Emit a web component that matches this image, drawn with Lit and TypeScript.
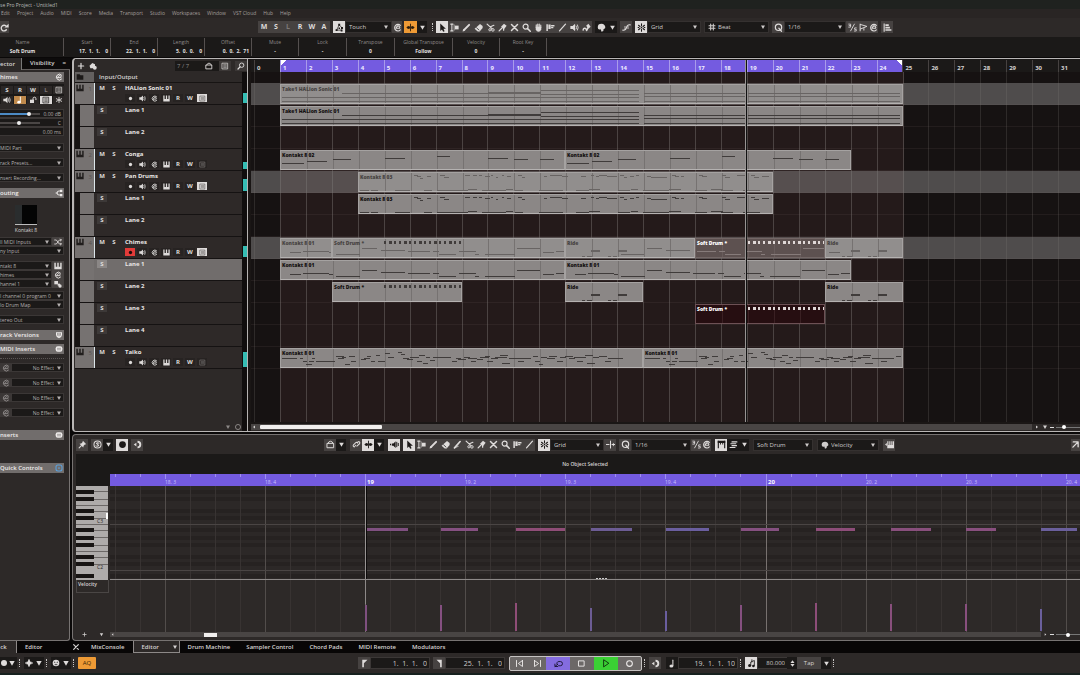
import { LitElement, html, svg, css, nothing } from "lit";
import { customElement, state } from "lit/decorators.js";
import { classMap } from "lit/directives/class-map.js";

const BAR = 25.94;
const ORIGIN = 3;
const barX = (n: number) => Math.round(ORIGIN + n * BAR);

const st = (d: string, w = 1.3) =>
  svg`<path d=${d} fill="none" stroke="currentColor" stroke-width=${w} stroke-linecap="round" stroke-linejoin="round"/>`;
const fl = (d: string) => svg`<path d=${d} fill="currentColor"/>`;

const ICONS: Record<string, unknown> = {
  down: fl("M2 3h8L6 10z"),
  left: fl("M8 3v6L4 6z"),
  right: fl("M4 3v6l4-3z"),
  updown: svg`${fl("M2.500 5h7L6 .500z")}${fl("M2.500 7h7L6 11.500z")}`,
  redo: svg`${st("M8.500 4.500A3.800 3.800 0 1 0 8.500 9", 1.8)}${fl("M6 6h5.500v-5z")}`,
  autom: svg`${st("M2.200 9.500L5.500 2.500L9.500 6.500M2.500 9.500H9", .9)}${fl("M4.300 1h2.600v2.600H4.300zM.800 8.200h2.600v2.600H.800zM8 5.300h2.600v2.600H8zM7.600 8.800h2.400v2.400H7.600zM4.700 6h2v2h-2z")}`,
  edit: st("M9.800 3.200A4.400 4.400 0 1 0 9.800 9.200M4.200 7h4.600A1.800 1.800 0 0 0 5.200 5Q4.200 5.600 4.200 7", 1.5),
  link: svg`${st("M6 1.500v9", 1.2)}${fl("M.500 6l2-2v1.200h2.800V3.500l.200 5H5.300V6.800H2.500V8zM11.500 6l-2-2v1.200H6.800v1.600h2.700V8z")}${fl("M2.800 4h2v4h-2zM7.200 4h2v4h-2z")}`,
  arrow: fl("M3 .500V10.500l2.300-2 1.600 3.300 1.900-.900-1.500-3.200h3.200z"),
  range: svg`${st("M1 1.500h3M1 10.500h3M2.500 1.500v9", 1.4)}${fl("M6.500 3.500h5v5h-5z")}${st("M5.500 2.500v7", .9)}`,
  pencil: svg`${st("M3.500 8.500L9.500 2.500", 2.6)}${fl("M.800 11.200l.900-3.700 2.800 2.800z")}`,
  eraser: svg`${fl("M.800 7.500L5 11.200h2.500L11.500 6.500V4L8 1.200z")}<path d="M3 6l4 3.700" stroke="#333" stroke-width="1.100"/>`,
  knife: svg`${st("M2 10.500L9.500 2", 2.2)}${st("M2 10.500l5-2", 1)}`,
  scissors: svg`${st("M1.500 1.500L8 7.500M6 5L10.500 3", 1.600)}<circle cx="9.200" cy="9.200" r="1.700" fill="none" stroke="currentColor" stroke-width="1.300"/><circle cx="5.200" cy="9" r="1.500" fill="none" stroke="currentColor" stroke-width="1.300"/>`,
  glue: svg`${fl("M4 5L8 1l3.500 2.800-3 4z")}${st("M1.500 10.500L6 6M7.500 6.500v3", 1.700)}`,
  mute: st("M2 2l8 8M10 2l-8 8", 2),
  zoom: svg`<circle cx="4.800" cy="4.800" r="3.300" fill="none" stroke="currentColor" stroke-width="1.600"/>${st("M7.500 7.500L11 11", 2)}`,
  search: svg`<circle cx="7" cy="4.800" r="3.300" fill="none" stroke="currentColor" stroke-width="1.400"/>${st("M4.500 7.300L1.500 10.500", 1.900)}`,
  hand: svg`${st("M3 6v-3.500M5 5V1.500M7 5V1.500M9 6V2.800", 1.500)}${fl("M2.300 5h7.400v3.500Q8.500 11.500 6 11.500 3.500 11.500 2.300 8.500z")}`,
  comp: fl("M.500 1.500h2v9h-2zM3.200 2h3v6h-3zM6.800 2.500h4.500v2.300H6.800zM6.800 5.300h3v1.700h-3z"),
  line: st("M2 10.500L10 1.500", 1.700),
  speaker: svg`${fl("M.500 4h3L6.800 1v10L3.500 8h-3z")}${st("M8.300 4Q9.600 6 8.300 8M10 2.500Q12 6 10 9.500", 1.200)}`,
  color: svg`${fl("M5.500 3.500L8.500 1l3 4-3 2.500z")}${st("M1.500 9.500Q2 6.500 4 7T6 9.500 8 6", 1.900)}`,
  palette: svg`<path d="M6 1a5 4.600 0 0 0-5 4.600Q1 9 4 8.500L5 8.300 6 11.500 8.500 10.500V8.500L11 6.500A5 4.800 0 0 0 6 1z" fill="currentColor"/>`,
  cross: svg`${st("M1 9.500Q5 10 6 6T11 2.500", 1.400)}${st("M4 4.500v3M8 4.500v3", 1.100)}`,
  snap: svg`${st("M6 1v2.500M6 8.500v2.500M2 3l2 1.700M10 3L8 4.700M2 9l2-1.700M10 9L8 7.300M1.500 6h1M9.500 6h1", 1.400)}${fl("M5 5h2v2H5z")}`,
  hash: st("M4 1.500v9M8 1.500v9M1.500 4h9M1.500 8h9", 1.600),
  q: svg`<circle cx="6" cy="5.800" r="4.200" fill="none" stroke="currentColor" stroke-width="1.600"/>${st("M6.500 7l3.500 4", 1.600)}`,
  frac: svg`${st("M3.500 10.500L8.500 1.500", 1.200)}${st("M1 1.500h2.500v4H1M1.500 3.500h2M11 6.500H8.800v2H11v2.200H8.500", 1.100)}`,
  quant: svg`${st("M1.500 1.500v9M2 2l8.500 2.500L2 8M6.500 7.500v2", 1.300)}`,
  align: fl("M.800 .500h1.500v11H.800zM3.200 1.800h4.500v2.200h-4.500zM3.200 5h6v2.200h-6zM3.200 8.200h8v2.200h-8z"),
  plus: st("M6 2v8M2 6h8", 1.800),
  addtrk: svg`${fl("M.800 5.500L5 1.500 9 3.500v3l-3 3H2z")}<circle cx="8.700" cy="8.700" r="2.900" fill="currentColor"/>`,
  home: svg`${st("M1.800 4.500H10.200V10.300H1.800z", 1.300)}${st("M2.500 4.500Q3.500 1.700 6 1.700T9.500 4.500", 1.300)}`,
  list: svg`${st("M2 1.800h8v8.600H2z", 1.100)}${st("M4 4.200h4M4 6.100h4M4 8h4", .9)}`,
  folder: fl("M1 2h4.500l1 1.500h4.500v6.500H1z"),
  piano: fl("M.500 1h2.200v6h2.200V1h2.200v6h2.200V1h2.200v10H.500z"),
  rec: svg`<circle cx="6" cy="6" r="2.800" fill="currentColor"/>`,
  big: svg`<circle cx="6" cy="6" r="4.500" fill="currentColor"/>`,
  note: svg`<ellipse cx="4.500" cy="9.200" rx="2.600" ry="2" fill="currentColor"/>${st("M6.500 9V1.500", 1.400)}`,
  lock: svg`${fl("M1.500 5.500H7.500v5h-6z")}${st("M6 5.500V4a2.200 2.200 0 0 1 4.400 0v1.500", 1.500)}`,
  star: st("M6 2v8M2 4l8 4M10 4L2 8", 1.300),
  route: svg`${st("M8 3H6A3 3 0 0 0 6 9h2M1.500 6h2", 1.400)}${fl("M7.500 1.300h3.500v3.200H7.500zM7.500 7.500h3.500v3.200H7.500z")}`,
  shuffle: st("M1 3h2.500L8 9h3M1 9h2.500L8 3h3M9.500 1.500L11 3 9.500 4.500M9.500 7.500L11 9 9.500 10.500", 1.300),
  plug: svg`${fl("M.500 1.500h5.500v5h-5.500z")}${fl("M5.500 5.500H9v3H5.500z")}<circle cx="9" cy="9" r="2.500" fill="currentColor"/>`,
  shield: svg`${fl("M1.500 2h9v4Q10 10 6 11 2 10 1.500 6z")}<path d="M4 3v4M8 3v4M6 3v5" stroke="#6c6867" stroke-width="1"/>`,
  ins: svg`<rect x="1" y="2" width="10" height="8" rx="3" fill="currentColor"/><path d="M3 5h6M3 7.200h6" stroke="#6c6867" stroke-width=".8"/>`,
  qc: svg`<rect x="1.500" y="1.500" width="9" height="9" rx="3" fill="none" stroke="#5aa0dc" stroke-width="1.600"/><circle cx="6" cy="6" r="1.300" fill="#5aa0dc"/>`,
  ring: svg`<circle cx="6" cy="6" r="3.800" fill="none" stroke="currentColor" stroke-width="1.400"/>`,
  pin: svg`${fl("M6.500 1l4.500 4.500-1.800.500-1.700 1.700-.500 2.300L2 5l2.300-.500L6 3z")}${st("M4.500 7.500L1.500 10.500", 1.400)}`,
  solo: svg`<circle cx="6" cy="6" r="4.700" fill="none" stroke="currentColor" stroke-width="1.400"/>${st("M8 4.300Q6 3 4.700 4.500L7.500 7.200Q6 9 4 7.800", 1.400)}`,
  half: svg`${fl("M6 1a5 5 0 0 1 0 10V8.500a2.500 2.500 0 0 0 0-5z")}${fl("M1 6l3.500-2.500v5z")}`,
  chain: svg`${st("M5 7L3 9.300a1.700 1.700 0 0 1-1-2.800l3-3a1.700 1.700 0 0 1 2.500.500", 1.400)}${st("M6.500 8.200L10 5a1.700 1.700 0 0 0-1.500-2.800L7 3.500", 1.400)}`,
  spkr2: svg`${fl("M0 5h1.500v2H0zM2.500 4.500h2l3-3v9L4.500 7.500h-2z")}${st("M9 3v6M11 4.500v3", 1.300)}`,
  nudge: svg`${st("M6 1.500v9M.500 6h3.500M8 6h3.500", 1.400)}${fl("M8 6l2.500-2.500v5z")}`,
  gate: svg`${fl("M1 1h10v3H1z")}${fl("M1 1h1.500v10H1zM9.500 1H11v10H9.500zM4 4h1.200v2H4zM7 4h1.200v2H7z")}`,
  layers: st("M4 2.500h6.500M2.500 5h6.500M4 7.500h6M1.500 10h6.500", 1.600),
  keys: svg`${fl("M3 1.500h1.600v5h1.100v-5h1.600v5h1.100v-5H10v5h.700v-5H12V11H3z")}${fl("M0 6l2.500-2v4z")}`,
  ext: st("M3 2.500h6.500V9M9.500 2.500L2.500 9.500", 1.800),
  cornerL: fl("M3 1h7L5.200 5.500V11H3z"),
  cornerR: fl("M9 1H2l4.800 4.500V11H9z"),
  prev: st("M2 2v8M10 2v8L4.500 6L10 2", 1.200),
  next: st("M10 2v8M2 2v8L7.500 6L2 2", 1.200),
  cycle: svg`${st("M6 9h2.500a2.800 2.800 0 0 0 0-5.600H6.500a2.500 2.500 0 0 0-2 4.200", 1.200)}${st("M5 7L1.500 9.800M1.200 6.800v3.200h3.600", 1.200)}`,
  stop: st("M2.500 2.500h7v7h-7z", 1.200),
  play: st("M3.500 1.500v9L10 6z", 1.200),
  metro: svg`<circle cx="3.500" cy="8.700" r="2" fill="currentColor"/><circle cx="8.500" cy="9.300" r="1.700" fill="currentColor"/>${st("M5 8.500V4l4.800-2v7M6.500 1v3", 1.100)}`,
  wave: fl("M0 5.300h2l1-1.800 1 1L5.300 .500h1.400L8 4.500l1-1 1 1.800h2v1.400h-2L9 8.500 8 7.500 6.700 11.500H5.300L4 7.500l-1 1-1-1.800H0z"),
  reel: svg`<circle cx="6" cy="6" r="5" fill="currentColor"/><path d="M3 4.500l2 1M9 4.500l-2 1M4 8.500h4" stroke="#222" stroke-width="1.200"/>`,
  x: st("M2.500 2.500l7 7M9.500 2.500l-7 7", 1.800),
};

const icon = (n: string, s = "") =>
  html`<svg class="ic ${s}" viewBox="0 0 12 12" aria-hidden="true">${ICONS[n]}</svg>`;

const btn = (n: string, label: string, cls = "") =>
  html`<button class="b ${cls}" aria-label=${label}>${icon(n)}</button>`;

const sel = (label: string, value: string, cls = "", lead: unknown = nothing) =>
  html`<label class="sel ${cls}">${lead}<select aria-label=${label}><option>${value}</option></select>${icon("down", "car")}</label>`;

const grip = () => html`<span class="grip"></span>`;

type Note = number[];
interface Clip { at: number; to: number; name: string; kind?: string; notes: Note[]; ticks?: boolean; }
interface Row { name: string; num?: number; clips: Clip[]; part?: boolean; armed?: boolean; meter?: number; picked?: boolean; }

const CONGA: Note[] = [[1,22,12],[26,20,10],[52,18,8],[104,20,7],[156,13,5],[207,20,7],[233,14,8],[259,14,8]];
const PAN: Note[] = [[55,4,2],[58,4,3],[61,3,5],[68,4,3],[81,5,2],[85,5,4],[106,5,2],[114,4,2],[120,3,2],[126,5,3],[132,2,2],[137,2,4],[143,2,2],[148,4,3],[159,4,2],[163,3,4],[185,3,3],[191,12,2],[203,6,3],
  [1,9,17],[12,7,17],[36,15,17],[65,8,17],[78,31,17],[109,9,16],[123,24,17],[147,7,16],[156,8,17],[180,24,17],[217,13,17],[230,11,16],[259,12,17],[272,7,16],[284,26,17],[310,12,16],[336,12,17],[352,12,16],[362,12,17],[384,17,17],
  [222,5,3],[232,3,2],[237,3,3],[240,8,2],[248,10,3],[261,4,2],[265,3,4],[271,4,3],[277,3,2],[288,4,3],[292,16,4],[313,4,2],[316,4,3],[322,3,3],[340,4,2],[343,5,3],[363,4,2],[366,5,4],[378,4,2],[381,6,2],[392,4,2],[395,5,4],[403,7,3]];
const CHIMES: Note[] = [[9,11,13],[22,26,12],[48,4,13],[55,24,15],[81,15,9],[100,24,11],[127,22,12],[152,6,12],[158,17,15],[178,17,12],[194,4,15],[204,30,15],[236,23,9],[262,11,13],[275,9,12]];
const RIDE: Note[] = [[16,3,17],[21,5,17],[25,9,11],[25,9,12],[42,3,17],[47,4,17],[52,9,11],[52,9,12]];
const TAIKO: Note[] = [[1,15,9],[19,3,9],[22,4,12],[25,6,15],[28,5,12],[31,3,9],[35,19,12],[55,8,7],[57,6,9],[61,4,8],[64,5,15],[68,6,7],[70,5,12],[80,5,10],[83,6,9],[86,4,7],[90,4,12],[95,4,6],[97,7,12],[104,5,4],[107,6,8],[117,4,3],[120,4,5],[122,6,9],[126,6,10],[129,9,8],[136,5,12],[138,6,6],[142,5,14],[145,4,8],[149,5,11],[152,18,8],[171,5,12],[175,5,9],[177,8,10],[183,6,8],[187,9,9],[190,5,12],[196,6,10],[199,9,8],[204,5,7],[206,6,12],[210,7,9],[214,12,8],[219,8,6],[221,8,14],[228,22,9],[237,6,12],[252,5,7],[254,5,12],[258,4,15],[260,6,8],[266,8,9],[268,8,7],[276,6,12],[279,6,8]];
const TAIKO_A: Note[] = [...TAIKO, [284,8,7],[288,6,9],[293,12,8],[296,6,12],[304,8,6],[306,8,14],[312,6,8],[318,8,7],[324,6,12],[327,8,9],[335,7,9]];
const TAIKO_B: Note[] = TAIKO.filter((n) => n[0] < 254);
const TAKE: Note[] = [[61,146,8],[104,27,8],[207,53,8],[207,53,7],[260,98,5],[260,98,9],[363,102,8],[363,102,11],[467,152,8],[467,152,11],[1,357,12],[1,357,16],[363,102,16],[467,152,16],[1,617,18]];

const ROWS: Row[] = [
  { name: "HALion Sonic 01", num: 1, part: true, meter: 10, clips: [{ at: 1, to: 25, name: "Take1 HALion Sonic 01", kind: "dim", notes: TAKE }] },
  { name: "Lane 1", clips: [{ at: 1, to: 25, name: "Take1 HALion Sonic 01", notes: TAKE }] },
  { name: "Lane 2", clips: [] },
  { name: "Conga", num: 2, meter: 7, clips: [{ at: 1, to: 12, name: "Kontakt 8 02", notes: CONGA }, { at: 12, to: 23, name: "Kontakt 8 02", notes: CONGA }] },
  { name: "Pan Drums", num: 3, part: true, meter: 12, clips: [{ at: 4, to: 20, name: "Kontakt 8 03", kind: "dim", notes: PAN }] },
  { name: "Lane 1", clips: [{ at: 4, to: 20, name: "Kontakt 8 03", notes: PAN }] },
  { name: "Lane 2", clips: [] },
  { name: "Chimes", num: 4, part: true, armed: true, meter: 11, clips: [
    { at: 1, to: 3, name: "Kontakt 8 01", kind: "dim", notes: CHIMES },
    { at: 3, to: 12, name: "Soft Drum *", kind: "dim", ticks: true, notes: CHIMES.map(([x, w, y]) => [x - 52, w, y]).filter((n) => n[0] > 0) },
    { at: 12, to: 17, name: "Ride", kind: "dim", notes: [...RIDE, [55, 23, 15], [81, 15, 9], [100, 24, 11]] },
    { at: 17, to: 22, name: "Soft Drum *", kind: "mix", ticks: true, notes: [[1,19,12],[23,6,12],[29,16,15],[49,17,12],[65,4,15],[75,30,15],[107,22,9]] },
    { at: 22, to: 25, name: "Ride", kind: "dim", notes: [...RIDE, [3, 11, 13]] }] },
  { name: "Lane 1", picked: true, clips: [{ at: 1, to: 12, name: "Kontakt 8 01", notes: CHIMES }, { at: 12, to: 23, name: "Kontakt 8 01", notes: CHIMES }] },
  { name: "Lane 2", clips: [{ at: 3, to: 8, name: "Soft Drum *", ticks: true, notes: [] }, { at: 12, to: 15, name: "Ride", notes: RIDE }, { at: 22, to: 25, name: "Ride", notes: RIDE }] },
  { name: "Lane 3", clips: [{ at: 17, to: 22, name: "Soft Drum *", kind: "hot", ticks: true, notes: [] }] },
  { name: "Lane 4", clips: [] },
  { name: "Taiko", num: 5, meter: 15, clips: [{ at: 1, to: 15, name: "Kontakt 8 01", notes: TAIKO_A }, { at: 15, to: 25, name: "Kontakt 8 01", notes: TAIKO_B }] },
];

const MENU = ["Edit", "Project", "Audio", "MIDI", "Score", "Media", "Transport", "Studio", "Workspaces", "Window", "VST Cloud", "Hub", "Help"];
const INFO = [["Name", "Soft Drum"], ["Start", "17.  1.  1.    0"], ["End", "22.  1.  1.    0"], ["Length", "5.  0.  0.    0"], ["Offset", "0.  0.  2.  71"],
  ["Mute", "-"], ["Lock", "-"], ["Transpose", "0"], ["Global Transpose", "Follow"], ["Velocity", "0"], ["Root Key", "-"]];
const TOOLS = ["range", "pencil", "eraser", "scissors", "glue", "mute", "zoom", "hand", "comp", "line", "speaker", "color"];
const KEY_TOOLS = ["range", "pencil", "eraser", "knife", "scissors", "glue", "mute", "zoom", "comp", "line"];

const BEAT = 100.13;
const HITS = [
  [256, 42, 26, "#7f5080"], [331, 37, 26, "#855081"], [406, 49, 28, "#8f4d77"], [481, 41, 23, "#6c5c94"], [556, 43, 20, "#6a5e9f"],
  [631, 38, 26, "#855080"], [706, 39, 28, "#8d4d79"], [781, 40, 27, "#884f7c"], [856, 30, 27, "#884f7e"], [931, 36, 22, "#6a5f9c"],
] as [number, number, number, string][];

@customElement("app-root")
export class AppRoot extends LitElement {
  @state() private lowerTab = "Editor";
  @state() private barCount = 32;

  private onResize = () => {
    this.barCount = Math.floor((window.innerWidth - 262) / BAR) + 1;
  };

  connectedCallback() {
    super.connectedCallback();
    this.onResize();
    window.addEventListener("resize", this.onResize);
  }

  disconnectedCallback() {
    window.removeEventListener("resize", this.onResize);
    super.disconnectedCallback();
  }

  static styles = css`
    :host { display: block; height: 100vh; min-height: 480px; overflow: hidden; background: #0a0808; color: #d6d3d2;
      font: 6px/8px "Open Sans", "Noto Sans", sans-serif; }
    * { box-sizing: border-box; }
    button, select, input { font: inherit; color: inherit; border: 0; padding: 0; margin: 0; background: none; border-radius: 0; min-width: 0; }
    select { appearance: none; flex: 1; outline: 0; }
    .ic { width: 8px; height: 8px; flex: none; display: block; }
    .b .ic { width: 9px; height: 9px; }
    .b.dk.n .ic { width: 7px; height: 7px; }
    .ic.car { width: 6px; height: 6px; pointer-events: none; }
    .app { display: grid; grid-template-rows: 9px 9px 19px 20px minmax(0, 1fr) 12px 20px 2px; height: 100%; }
    .title { background: #1f221f; font-size: 5px; line-height: 10px; color: #bbb; }
    .menu { background: #292524; display: flex; gap: 7px; font-size: 5px; color: #a39f9d; padding-left: 1px; }
    .menu a { color: inherit; text-decoration: none; line-height: 9px; }
    .row { display: flex; align-items: center; }
    .bar { background: #2d2928; height: 100%; padding-bottom: 1px; }
    .lead { width: 258px; flex: none; }
    .lead .b { width: 9px; }
    .b { width: 12px; height: 12px; flex: none; display: flex; align-items: center; justify-content: center; background: #464241; color: #dedbda; }
    .b.on { background: #dedbda; color: #1c1918; }
    .b.or { background: #ee9a35; color: #2a1c0c; width: 13px; }
    .b.dk { background: #1b1918; }
    .b.n { width: 10px; }
    .b.txt { font-weight: 700; font-size: 7px; }
    .b.off { color: #7d7877; }
    .set { display: flex; margin-right: 3px; flex: none; }
    .set.s0 { margin-right: 2px; }
    .sel { display: flex; align-items: center; height: 12px; background: #1b1918; border: 1px solid #353130; padding: 0 2px 0 3px; color: #cfcccb; }
    .sel .ic:first-child { margin-right: 2px; }
    .grip { width: 3px; height: 8px; flex: none; border-left: 1px dotted #c9c6c5; margin: 0 1px 0 2px; }
    .w46 { width: 47px; } .w54 { width: 54px; } .w64 { width: 65px; } .w60 { width: 60px; } .w62 { width: 62px; }
    .info { background: #1b1918; display: flex; padding: 1px 0; }
    .cell { width: 47px; flex: none; text-align: center; border-right: 1px solid #55504f; display: flex; flex-direction: column; font-size: 5px; line-height: 9px; color: #8f8b8a; white-space: pre; }
    .cell b { color: #e4e1e0; font-weight: 700; }
    .cell:first-child { width: 64px; padding-right: 18px; }
    .cell:nth-child(n+2):nth-child(-n+5) b { text-align: right; padding-right: 2px; }
    .cell:nth-child(9) { width: 58px; }
    .cell:nth-child(7), .cell:nth-child(8) { width: 48px; }

    .main { display: grid; grid-template-columns: 70px minmax(0, 1fr); gap: 2px; min-height: 0; padding-top: 1px; }
    .insp { display: flex; flex-direction: column; min-height: 0; overflow: hidden; }
    .itabs { display: flex; height: 12px; background: #0d0b0b; line-height: 11px; flex: none; }
    .itabs button { padding: 0 6px 0 0; font-weight: 600; }
    .itabs .act { background: #2d2928; width: 22px; border-right: 1px solid #777; }
    .itabs .vis { flex: 1; padding: 0; border-bottom: 1px solid #625e5d; }
    .itabs .mn { border-bottom: 1px solid #625e5d; font-weight: 700; padding-right: 4px; }
    .ibody { flex: 1; min-height: 0; background: #2d2928; border-right: 1px solid #777372; border-bottom: 1px solid #777372; border-radius: 0 0 3px 0; padding: 2px 5px 0 0; display: flex; flex-direction: column; }
    .hd { height: 10px; flex: none; background: #716d6c; color: #eeebea; font-weight: 600; display: flex; align-items: center; justify-content: space-between; padding-right: 1px; line-height: 9px; white-space: nowrap; }
    .pads { display: grid; grid-template-columns: repeat(5, 12px); gap: 1px; padding: 2px 2px 0 1px; margin: 2px 0 5px; background: #1b1918; height: 20px; flex: none; }
    .pads .b { width: 12px; height: 8px; background: #2b2726; font-size: 6px; }
    .pads .b .ic { width: 8px; height: 8px; }
    .pads .b.on { background: #dedbda; } .pads .b.or { background: #c08a4c; color: #fff; }
    .fld { display: flex; align-items: center; justify-content: space-between; gap: 2px; height: 9px; background: #1b1918; border: 1px solid #3b3736; border-left: 0; font-size: 5px; color: #b5b1b0; padding: 0 2px 0 0; flex: none; white-space: nowrap; }
    .fld input[type="range"] { appearance: none; width: 40px; height: 2px; background: #4a4645; }
    .fld input.vol { background: linear-gradient(90deg, #4c8ac4 72%, #4a4645 72%); }
    .fld input::-webkit-slider-thumb { appearance: none; width: 4px; height: 4px; border-radius: 50%; background: #eee; }
    .isel { height: 9px; width: auto; font-size: 5px; padding: 0 1px 0 0; color: #b5b1b0; border-color: #3b3736; border-left: 0; flex: none; }
    .gap6 { margin-top: 6px; }
    .gap7 { margin-top: 7px; }
    .gap3 { margin-top: 3px; }
    .gap4 { margin-top: 4px; }
    .pair { display: flex; flex: none; height: 9px; }
    .pair .isel { flex: 1; }
    .pair .b { height: 9px; width: 12px; }
    .pair .b .ic { width: 8px; height: 8px; }
    .pair .b.gh { background: #3b3736; color: #8d8988; }
    .pic { width: 22px; height: 20px; align-self: center; margin: 7px 12px 1px 0; background: linear-gradient(90deg, #2a2d2e 7px, #040404 7px); border-bottom: 1px solid #bbb; flex: none; }
    .cap { align-self: center; font-size: 5px; margin-bottom: 3px; margin-right: 12px; flex: none; }
    .fxs { margin-top: 4px; padding-top: 4px; border-top: 1px dotted #5a5655; }
    .fx { margin-bottom: 6px; } .fx select { text-align-last: right; padding-right: 2px; }
    .qch { margin-top: 23px; }

    .zones { display: grid; grid-template-rows: minmax(0, 1fr) 207px; gap: 2px; min-height: 0; min-width: 0; }
    .proj { border: 1px solid #b9b6b5; border-width: 1px 0 1px 2px; border-radius: 4px 0 0 4px; padding-left: 1px; display: grid; grid-template-columns: 167px 5px 4px minmax(0, 1fr); min-height: 0; overflow: hidden; background: #2d2928; }
    .tl { display: flex; flex-direction: column; min-height: 0; }
    .th { height: 13px; flex: none; display: flex; align-items: center; padding-top: 1px; background: #2d2928; margin-right: -5px; position: relative; }
    .th .b { background: none; height: 10px; }
    .th .b .ic { width: 8px; height: 8px; }
    .th .b:last-child { margin-left: 4px; background: #3b3736; }
    .th .cnt { width: 56px; margin-left: auto; background: #1b1918; display: flex; align-items: center; color: #8d8988; justify-content: flex-end; height: 10px; }
    .th .cnt span { flex: 1; padding-left: 2px; }
    .io { height: 11px; flex: none; display: flex; border-bottom: 1px solid #171413; font-weight: 600; line-height: 10px; }
    .io .gut { background: #63605f; width: 19px; color: #1c1918; }
    .io span { padding-left: 5px; }
    .trk { height: 22px; flex: none; display: grid; grid-template-columns: 19px 3px 12px 16px 1fr; border-bottom: 1px solid #151212; background: #2e2928; color: #e3e0df; }
    .trk.pick { background: #716d6c; }
    .gut { display: flex; justify-content: space-between; padding: 1px 2px 0 1px; background: #767271; color: #201d1c; }
    .gut .nm { color: #565251; font-size: 6px; line-height: 10px; }
    .trk.lane .gut { border-left: 5px solid #171413; }
    .edge { background: #dce6ea; width: 1px; }
    .trk.lane .edge { background: none; }
    .b.ms { background: none; width: 10px; height: 8px; margin-top: 1px; font-size: 6px; }
    .trk.lane .ms { background: #3d3938; }
    .trk.pick .ms { background: #8b8786; }
    .nmx { font-weight: 700; line-height: 11px; color: #e9e6e5; }
    .ctl { display: flex; gap: 2px; }
    .ctl .b { width: 10px; height: 8px; font-size: 6px; background: #272322; }
    .ctl .b .ic { width: 7px; height: 7px; }
    .ctl .b.on { background: #dedbda; color: #5a5655; } .ctl .b.arm { background: #e23b39; color: #1c0a0a; }
    .tf { margin-top: auto; height: 9px; display: flex; justify-content: flex-end; gap: 3px; color: #8d8988; align-items: center; }
    .mcol { background: #100d0d; padding-top: 24px; }
    .mc { height: 22px; display: flex; align-items: flex-end; padding: 0 0 2px 1px; }
    .mc i { flex: 1; background: #35bdb4; }
    .div { border-left: 1px solid #b5b2b1; background: #1a1615; }
    .ev { display: flex; flex-direction: column; min-width: 0; min-height: 0; position: relative; }
    .rul { height: 13px; flex: none; display: flex; padding-top: 1px; padding-left: 3px; background: #1b1918; overflow: hidden; font-weight: 700; color: #d6d3d2; }
    .rul span { flex: none; padding-left: 2px; line-height: 16px; border-left: 1px solid #474241; }
    .rul span.in { background: #745be0; border-left-color: #a99bea; color: #efecff; }
    .rul span.first { background: linear-gradient(135deg, #fff 4px, #745be0 4px); }
    .rul span.last { background: linear-gradient(225deg, #fff 4px, #745be0 4px); }
    .evs { flex: 1; min-height: 0; position: relative; overflow: hidden; background: #161212; padding-top: 11px; }
    .grid { position: absolute; inset: 0; width: 100%; height: 100%; }
    .lane2 { height: 22px; position: relative; border-bottom: 1px solid rgba(120, 110, 108, .13); }
    .lane2.part { background: rgba(128, 124, 123, .55); }
    .clip { position: absolute; top: 1px; height: 20px; background: #8b8786; border: 1px solid #a5a2a1; border-bottom-color: #b5b2b1; overflow: hidden; color: #131010; font-size: 5px; font-weight: 700; line-height: 8px; padding-left: 1px; }
    .clip svg { position: absolute; inset: 0; width: 100%; height: 100%; }
    .clip b { position: relative; }
    .clip .n { fill: #403c3b; } .clip .g { fill: #767271; }
    .clip.dim { background: #918e8d; color: #474342; } .clip.dim .n { fill: #686463; }
    .clip.mix { background: #5d5150; border-color: #736766; color: #fff; } .clip.mix .n { fill: #867b7a; } .clip.mix .g { fill: #685c5b; }
    .clip.hot { background: #260e11; border-color: #6d5155; color: #fff; } .clip.hot .g { fill: #3a2023; }
    .t { fill: #403c3b; }
    .clip.mix .t, .clip.hot .t { fill: #e0d8d7; }
    .head { position: absolute; top: 1px; bottom: 9px; left: 494px; width: 2px; background: #989493; border-right: 1px solid #111; }
    .sb { height: 9px; flex: none; background: #494544; display: flex; align-items: center; border-top: 2px solid #1a1615; border-bottom: 1px solid #2d2928; color: #d6d3d2; }
    .sb .thumb { height: 4px; background: #f1efee; border-radius: 1px; width: 122px; }
    .sb .ic { width: 6px; height: 6px; }
    .zoomer { margin-left: auto; display: flex; align-items: center; gap: 2px; background: #2d2928; height: 100%; padding-left: 2px; }
    .zoomer input { appearance: none; width: 24px; height: 1px; background: #777; }
    .zoomer input::-webkit-slider-thumb { appearance: none; width: 4px; height: 4px; border-radius: 50%; background: #fff; }
    .min { width: 4px; height: 1px; background: #ddd; }

    .low { border: 1px solid #777372; border-right: 0; border-radius: 4px 0 0 4px; padding: 0 0 3px 3px; background: #2d2928; display: flex; flex-direction: column; min-width: 0; overflow: hidden; }
    .lt { height: 19px; flex: none; }
    .lt .first { width: 248px; flex: none; display: flex; gap: 3px; }
    .lt .set { margin-right: 4px; }
    .lt .first .set { margin: 0; }
    .lt > .b:last-child { margin-left: auto; width: 9px; }
    .lt .set.sp { margin-right: 3px; }
    .nos { height: 20px; flex: none; background: #1b1918; font-weight: 600; font-size: 5px; text-align: center; line-height: 20px; padding-left: 14px; }
    .ed { display: grid; grid-template-columns: 34px minmax(0, 1fr); grid-template-rows: 12px 94px 52px; flex: none; }
    .ed svg { width: 100%; height: 100%; display: block; }
    .kc { background: #1b1918; }
    .r2 { background: #745be0; color: #d9d2ff; }
    .r2 text { fill: #c9c0fa; font-size: 5px; } .r2 text.m { fill: #fff; font-weight: 700; font-size: 6px; }
    .kb { border-right: 2px solid #2d2928; }
    .kb text { font-size: 5px; fill: #2a2625; }
    .vel { height: 13px; width: 33px; border: 1px solid #4a4645; border-top: 0; font-weight: 600; font-size: 5px; padding-left: 1px; }
    .keys { border-bottom: 1px solid #8d8988; }
    .hs { height: 5px; flex: none; display: flex; align-items: center; background: #494544; }
    .hs .lc { width: 34px; background: #2d2928; display: flex; justify-content: space-around; }
    .hs .ic { width: 5px; height: 5px; }
    .hs .thumb { width: 13px; height: 4px; background: #f1efee; margin-left: 89px; }

    .tabs { background: #080606; display: flex; font-weight: 600; }
    .tabs button { font-weight: 600; line-height: 12px; padding: 0 8px; }
    .tabs button.act { background: #2d2928; }
    .tabs .l { width: 70px; display: flex; }
    .tabs .l button.act { padding: 0 9px 0 0; width: 17px; border-right: 1px solid #8d8988; }
    .tabs button.cl { padding: 0 2px; width: 13px; }
    .tabs button.ed2 { width: 47px; display: flex; align-items: center; justify-content: space-between; padding: 0 1px 0 8px; border: 1px solid #8d8988; border-top: 0; }
    .tr { background: #2d2928; display: flex; align-items: center; }
    .tr .left { width: 358px; flex: none; display: flex; align-items: center; }
    .tr .grip { margin: 0 2px; }
    .tr .b { height: 12px; }
    .tr .b.cut { width: 7px; }
    .tr .left .b .ic { width: 8px; height: 8px; }
    .aq { width: 18px; height: 12px; background: #ee9a35; color: #3a2508; border-radius: 1px; }
    .pos { width: 60px; height: 12px; background: #1b1918; border: 1px solid #3b3736; font-size: 7px; text-align: right; padding-right: 2px; color: #cfcccb; }
    .pos.sm { width: 30px; font-size: 6px; border-right: 0; }
    .tp { display: flex; width: 133px; height: 15px; border: 1px solid #c5c2c1; border-radius: 2px; background: #6c6867; margin: 0 0 0 4px; overflow: hidden; flex: none; }
    .tp .b { flex: 1; height: 13px; background: none; color: #efedec; }
    .tp .b:nth-child(-n+2) { flex: 0 0 18px; }
    .tp .b.cy { background: #846ce0; color: #1a1430; flex: 0 0 24px; } .tp .b.pl { background: #3ad034; color: #0d2a0b; flex: 0 0 24px; }
    .tap { width: 24px; height: 12px; background: #464241; }
    .m3 { margin-left: 3px; } .m5 { margin-left: 5px; }
    .foot { background: #17211f; }
  `;

  private clip(c: Clip) {
    const x = barX(c.at);
    const w = barX(c.to) - x;
    const lines: number[] = [];
    for (let b = c.at + 1; b < c.to; b++) lines.push(barX(b) - x);
    const ticks: number[] = [];
    if (c.ticks) for (let t = c.at === 17 ? 52 : 51; t < 128; t += 5) ticks.push(t);
    return html`<div class="clip ${c.kind ?? ""}" style="left:${x}px;width:${w}px">
      <svg>
        ${lines.map((l) => svg`<rect class="g" x=${l} y="0" width="1" height="20"/>`)}
        ${c.notes.filter((n) => n[0] < w).map((n) => svg`<rect class="n" x=${n[0]} y=${n[2]} width=${n[1]} height="1"/>`)}
        ${ticks.map((t, i) => svg`<rect class="t" x=${t} y="2" width=${i % 3 === 1 ? 3 : 2} height="3"/>`)}
      </svg><b>${c.name}</b></div>`;
  }

  private track(r: Row) {
    const lane = !r.num;
    return html`<div class=${classMap({ trk: true, lane, pick: !!r.picked })}>
      <div class="gut">${lane ? nothing : html`${icon("piano")}<span class="nm">${r.num}</span>`}</div>
      <div class="edge"></div>
      ${lane
        ? html`<button class="b txt ms">S</button><span></span>`
        : html`<button class="b txt ms">M</button><button class="b txt ms">S</button>`}
      <div><div class="nmx">${r.name}</div>
        ${lane ? nothing : html`<div class="ctl">
          ${btn("rec", "Record enable", r.armed ? "arm" : "")}${btn("speaker", "Monitor")}${btn("edit", "Edit channel")}${btn("piano", "Instrument")}
          <button class="b txt">R</button><button class="b txt">W</button>${btn("list", "Lanes", r.part ? "on" : "off")}</div>`}
      </div></div>`;
  }

  private gridLines() {
    const out = [];
    for (let n = 0; n <= this.barCount + 1; n++) {
      out.push(svg`<rect x=${barX(n)} y="0" width="1" height="100%" fill=${n > 0 && n <= 25 ? "#4b4342" : "#2e2a29"}/>`);
    }
    return svg`<rect x=${barX(1)} y="0" width=${barX(25) - barX(1)} height="100%" fill="#241a1a"/>${out}`;
  }

  private fields(items: [string, string][]) {
    return items.map(([v, ic]) => html`<div class="pair">${sel(v, v, "isel")}${ic ? btn(ic, v) : nothing}</div>`);
  }

  private inspector() {
    return html`<aside class="insp">
      <div class="itabs"><button class="act">ector</button><button class="vis">Visibility</button><button class="mn" aria-label="Setup">=</button></div>
      <div class="ibody">
        <div class="hd">himes ${icon("edit")}</div>
        <div class="pads">
          ${["S", "R", "W", "L"].map((t) => html`<button class="b txt ${t === "L" ? "off" : ""}">${t}</button>`)}${btn("list", "Lanes")}
          ${btn("speaker", "Monitor")}${btn("note", "Timebase", "or")}${btn("lock", "Lock")}${btn("list", "Show lanes", "on")}${btn("star", "Freeze")}
        </div>
        <label class="fld"><input class="vol" type="range" aria-label="Volume" value="76">0.00 dB</label>
        <label class="fld"><input type="range" aria-label="Pan" value="46">C</label>
        <div class="fld"><span></span>0.00 ms</div>
        ${sel("Part", "MIDI Part", "isel gap7")}${sel("Presets", "rack Presets...", "isel gap6")}${sel("Recording", "nsert Recording...", "isel gap6")}
        <div class="hd gap6">outing ${icon("route")}</div>
        <div class="pic"></div><div class="cap">Kontakt 8</div>
        ${this.fields([["ll MIDI Inputs", "shuffle"], ["ny Input", ""]])}
        <div class="gap6">${this.fields([["ntakt 8", "piano"], ["himes", "edit"], ["hannel 1", "plug"]])}</div>
        <div class="gap3">${this.fields([["l channel 0 program 0", ""], ["lo Drum Map", ""]])}</div>
        ${sel("Output", "tereo Out", "isel gap6")}
        <div class="hd gap6">rack Versions ${icon("shield")}</div>
        <div class="hd gap4">MIDI Inserts ${icon("ins")}</div>
        <div class="fxs">${[1, 2, 3, 4].map((n) => html`<div class="pair fx">${btn("edit", "Edit insert " + n, "gh")}${sel("Insert " + n, "No Effect", "isel")}</div>`)}</div>
        <div class="hd gap7">nserts ${icon("ins")}</div>
        <div class="hd qch">Quick Controls ${icon("qc")}</div>
      </div></aside>`;
  }

  private keyboard() {
    const H = 46 / 12;
    const octaves = [84, 38, -8];
    const whites = octaves.flatMap((c) => [0, 2, 4, 5, 7, 9, 11].map((n) => Math.round(c - (n + (n === 4 || n === 11 ? 1 : 1.5)) * H)));
    const blacks = octaves.flatMap((c) => [1, 3, 6, 8, 10].map((n) => Math.round(c - (n + 1) * H)));
    return html`<svg class="kb"><rect width="32" height="94" fill="#aeabaa"/>
      ${whites.map((y) => svg`<rect x="0" y=${y} width="32" height="1" fill="#6b6766"/>`)}
      ${[...blacks, 88].map((y) => svg`<rect x="0" y=${y} width="18" height="4" fill="#171413"/>`)}
      <rect x="30" y="27" width="2" height="6" fill="#fff"/>
      <text x="21" y="37">C3</text><text x="21" y="83">C2</text></svg>`;
  }

  private editor() {
    const six: [number, number][] = [];
    for (let i = -10; i < (window.innerWidth - 370) / (BEAT / 4); i++) {
      const x = Math.round(255 + (i * BEAT) / 4);
      if (x >= 0) six.push([x, i]);
    }
    const vlines = (h: number) => six.map(([x, i]) => svg`<rect x=${x} y="0" width="1" height=${h} fill=${i % 16 === 0 ? "#77716f" : i % 4 === 0 ? "#524d4b" : "#383332"}/>`);
    const rows: number[] = [];
    for (let o = 0; o < 3; o++) for (const n of [1, 3, 6, 8, 10]) rows.push(38 + o * 46 - (n + 1) * (46 / 12));
    const label = (i: number) => {
      const bar = 19 + Math.floor(i / 16);
      const beat = ((i % 16) + 16) % 16 / 4 + 1;
      return beat === 1 ? `${bar}` : `${bar}. ${beat}`;
    };
    return html`<div class="ed">
      <div class="kc"></div>
      <svg class="r2">${six.map(([x, i]) => svg`<rect x=${x} y="0" width="1" height=${i % 16 === 0 ? 12 : i % 4 === 0 ? 5 : 3} fill="#9f90ee"/>
        ${i % 4 === 0 ? svg`<text class=${i % 16 === 0 ? "m" : ""} x=${x + (i % 16 === 0 ? 2 : 0)} y="10">${label(i)}</text>` : nothing}`)}</svg>
      <div>${this.keyboard()}</div>
      <svg class="keys"><rect width="100%" height="94" fill="#2c2827"/>
        ${rows.map((y) => svg`<rect x="0" y=${Math.round(y)} width="100%" height="4" fill="#262221"/>`)}
        ${vlines(94)}
        <rect x="0" y="38" width="100%" height="1" fill="#4a4544"/><rect x="0" y="84" width="100%" height="1" fill="#4a4544"/>
        ${HITS.map(([x, w, , c]) => svg`<rect x=${x} y="42" width=${w} height="3" fill=${c}/>`)}
        <rect x="255" y="0" width="1" height="94" fill="#989493"/><rect x="256" y="0" width="1" height="94" fill="#0d0b0b"/>
        ${[0, 3, 6, 9].map((d) => svg`<rect x=${486 + d} y="92" width="2" height="2" fill="#ccc"/>`)}
      </svg>
      <div class="vel">Velocity</div>
      <svg>${vlines(52)}
        <rect x="255" y="0" width="1" height="24" fill="#8d8988"/>
        ${HITS.map(([x, , h, c]) => svg`<rect x=${x - 1} y=${51 - h} width="2" height=${h} fill=${c}/>`)}
      </svg>
    </div>`;
  }

  render() {
    const bars = [];
    for (let n = 0; n < this.barCount; n++) bars.push(n);
    return html`<div class="app">
      <header class="title">se Pro Project - Untitled1</header>
      <nav class="menu">${MENU.map((m) => html`<a href="#">${m}</a>`)}</nav>
      <div class="bar row">
        <div class="lead">${btn("redo", "Redo")}</div>
        <div class="set">${["M", "S", "L", "R", "W", "A"].map((t) => html`<button class="b txt ${t === "L" ? "off" : ""}">${t}</button>`)}</div>
        <div class="set s0">${btn("autom", "Automation mode", "on")}${sel("Automation", "Touch", "w46")}${btn("edit", "Automation panel", "n")}</div>
        <div class="set">${btn("link", "Auto-scroll", "or")}${btn("down", "Auto-scroll menu", "dk n")}</div>
        ${grip()}
        <div class="set">${btn("arrow", "Select", "on")}${TOOLS.map((t) => btn(t, t))}</div>
        <div class="set">${btn("palette", "Color", "dk")}${btn("down", "Color menu", "dk n")}</div>
        <div class="set">${btn("cross", "Crossfade")}</div>
        <div class="set">${btn("snap", "Snap", "on")}${sel("Snap type", "Grid", "w54")}</div>
        <div class="set">${sel("Grid type", "Beat", "w64", icon("hash"))}</div>
        <div class="set">${btn("q", "Quantize")}${sel("Quantize preset", "1/16", "w62")}${btn("frac", "Iterative")}${btn("quant", "Soft quantize", "n")}${btn("edit", "Quantize panel", "n")}</div>
        <div class="set">${btn("align", "Align")}</div>
      </div>
      <div class="info">${INFO.map(([k, v]) => html`<div class="cell"><span>${k}</span><b>${v}</b></div>`)}</div>
      <main class="main">
        ${this.inspector()}
        <div class="zones">
          <section class="proj">
            <div class="tl">
              <div class="th">${btn("plus", "Add track")}${btn("addtrk", "Add track preset")}
                <div class="cnt"><span>7 / 7</span>${btn("home", "Filter")}${btn("list", "Agents")}</div>${btn("search", "Find track")}</div>
              <div class="io"><div class="gut">${icon("folder")}</div><span>Input/Output</span></div>
              ${ROWS.map((r) => this.track(r))}
              <div class="tf">${icon("down", "car")}${icon("ring")}</div>
            </div>
            <div class="mcol">${ROWS.map((r) => html`<div class="mc">${r.meter ? html`<i style="height:${r.meter}px"></i>` : nothing}</div>`)}</div>
            <div class="div"></div>
            <div class="ev">
              <div class="rul">${bars.map((n) => html`<span class=${classMap({ in: n >= 1 && n < 25, first: n === 1, last: n === 24 })} style="width:${BAR}px">${n}</span>`)}</div>
              <div class="evs"><svg class="grid">${this.gridLines()}</svg>
                ${ROWS.map((r) => html`<div class="lane2 ${r.part ? "part" : ""}">${r.clips.map((c) => this.clip(c))}</div>`)}
              </div>
              <div class="sb">${icon("left")}<span class="m3"></span><div class="thumb"></div>
                <div class="zoomer">${icon("right")}${icon("down")}<span class="min"></span><input type="range" aria-label="Zoom" value="30"></div></div>
              <div class="head"></div>
            </div>
          </section>
          <section class="low">
            <div class="lt row">
              <div class="first">${btn("pin", "Pin")}<div class="set">${btn("solo", "Solo editor")}${btn("down", "Solo menu", "dk n")}</div>${btn("big", "Record in editor", "on")}${btn("half", "Feedback")}</div>
              <div class="set">${btn("home", "Part")}${btn("down", "Part menu", "dk n")}</div>
              <div class="set">${btn("chain", "Link")}${btn("link", "Auto-scroll", "on")}${btn("down", "Scroll menu", "dk n")}</div>
              <div class="set sp">${btn("spkr2", "Acoustic feedback", "on")}</div>
              <div class="set sp">${btn("arrow", "Select", "on")}${KEY_TOOLS.map((t) => btn(t, t))}</div>
              <div class="set sp">${btn("snap", "Snap", "on")}${sel("Snap type", "Grid", "w54")}${btn("nudge", "Nudge")}</div>
              <div class="set">${btn("q", "Quantize")}${sel("Quantize preset", "1/16", "w60")}${btn("frac", "Iterative", "n")}${btn("edit", "Quantize panel", "n")}</div>
              <div class="set">${btn("gate", "Step input", "on")}${btn("layers", "Layers", "dk")}${btn("down", "Layer menu", "dk n")}</div>
              <div class="set">${sel("Part", "Soft Drum", "w60")}</div>
              <div class="set">${sel("Colors", "Velocity", "w62", icon("palette"))}</div>
              <div class="set">${btn("keys", "Chord input")}</div>
              ${btn("ext", "Open in window")}
            </div>
            <div class="nos">No Object Selected</div>
            ${this.editor()}
            <div class="hs"><div class="lc">${icon("plus")}${icon("down")}</div>${icon("left")}<div class="thumb"></div>
              <div class="zoomer">${icon("right")}<span class="min"></span><input type="range" aria-label="Editor zoom" value="50"></div></div>
          </section>
        </div>
      </main>
      <div class="tabs">
        <div class="l"><button class="act">ck</button><button>Editor</button></div>
        <button class="cl" aria-label="Close zone">${icon("x")}</button>
        ${["MixConsole", "Editor", "Drum Machine", "Sampler Control", "Chord Pads", "MIDI Remote", "Modulators"].map((t) =>
          html`<button class=${classMap({ act: t === this.lowerTab, ed2: t === "Editor" })} @click=${() => (this.lowerTab = t)}>${t}${t === "Editor" ? icon("down", "car") : nothing}</button>`)}
      </div>
      <footer class="tr">
        <div class="left">${btn("big", "Record mode", "dk cut")}${btn("down", "Record menu", "dk n")}${grip()}
          ${btn("wave", "Audio mode", "dk n")}${btn("down", "Audio menu", "dk n")}${grip()}
          ${btn("reel", "MIDI mode", "dk n")}${btn("down", "MIDI menu", "dk n")}${grip()}<button class="aq">AQ</button></div>
        ${btn("cornerL", "Go to left locator")}<input class="pos" aria-label="Left locator" value="1.  1.  1.   0">
        <span class="m3"></span>${btn("cornerR", "Go to right locator")}<input class="pos" aria-label="Right locator" value="25.  1.  1.   0">
        <div class="tp">${btn("prev", "Previous")}${btn("next", "Next")}${btn("cycle", "Cycle", "cy")}${btn("stop", "Stop")}${btn("play", "Play", "pl")}${btn("ring", "Record")}</div>
        ${grip()}${btn("half", "Punch")}<span class="m5"></span>
        ${btn("note", "Time format", "dk")}<input class="pos" aria-label="Position" value="19.  1.  1.  10">${grip()}
        ${btn("metro", "Tempo track", "on")}<input class="pos sm" aria-label="Tempo" value="80.000">${btn("updown", "Tempo step", "dk n")}
        <button class="tap">Tap</button>${btn("down", "Tap menu", "dk n")}${grip()}
      </footer>
      <div class="foot"></div>
    </div>`;
  }
}
